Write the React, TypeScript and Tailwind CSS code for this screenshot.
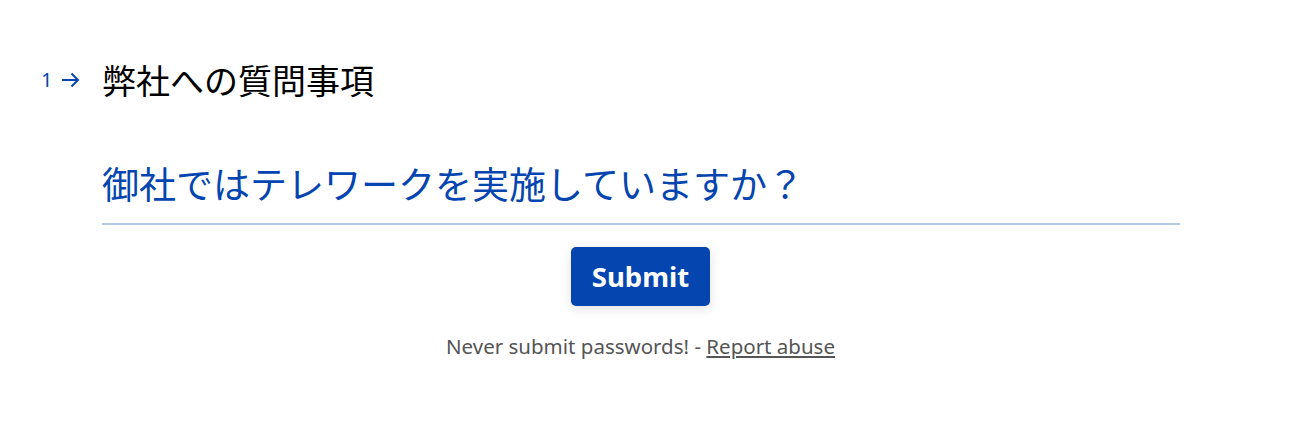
export default function App() {
  return (
    <div className="min-h-screen bg-white font-['Noto_Sans','Noto_Sans_CJK_JP',sans-serif]">
      <div className="flex pt-[58px] pl-[41px]">
        <div className="w-[61px] flex items-center h-[44px] text-[#0445af] gap-[9px]">
          <span className="text-[20px] leading-none">1</span>
          <svg width="19" height="16" viewBox="0 0 19 16" fill="none" stroke="#0445af" strokeWidth="2">
            <path d="M1 8h16M10.5 1.5L17 8l-6.5 6.5" />
          </svg>
        </div>
        <div className="w-[1078px]">
          <h1 className="text-[34px] leading-[44px] text-black font-['Noto_Sans_CJK_JP',sans-serif]">
            弊社への質問事項
          </h1>
          <div className="mt-[55px] border-b-2 border-[#0445af]/30 pb-[14px]">
            <p className="text-[37px] leading-[52px] text-[#0445af] font-['Noto_Sans_CJK_JP',sans-serif]">
              御社ではテレワークを実施していますか？
            </p>
          </div>
        </div>
      </div>
      <div className="flex flex-col items-center mt-[22px] mr-[18px]">
        <button className="w-[139px] h-[59px] rounded-[5px] bg-[#0445af] text-white text-[27.5px] font-bold shadow-[0_3px_12px_rgba(0,0,0,0.12)]">
          Submit
        </button>
        <p className="mt-[25px] text-[20.5px] text-[#555]">
          Never submit passwords! - <span className="underline">Report abuse</span>
        </p>
      </div>
    </div>
  );
}
